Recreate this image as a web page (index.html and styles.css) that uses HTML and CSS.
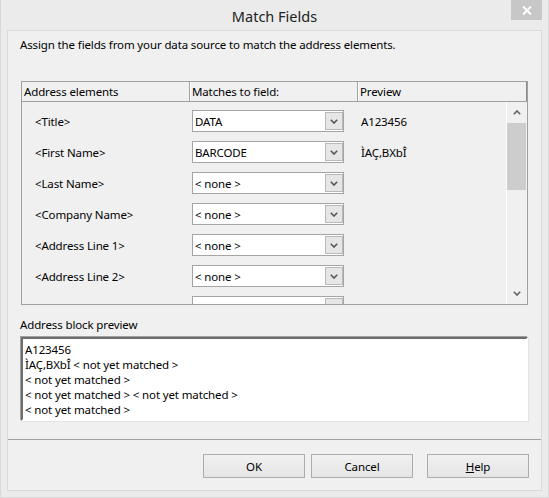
FILE: index.html
```html
<!DOCTYPE html>
<html lang="en">
<head>
    <meta charset="UTF-8">
    <title>Match Fields</title>
    <link rel="stylesheet" href="styles.css">
</head>
<body>

<div class="window">
    <div class="titlebar">
        <span></span>
        <div class="title">Match Fields</div>
        <div class="close">
            <svg width="10" height="9" viewBox="0 0 10 9"><path d="M1 0.5 L9 8.5 M9 0.5 L1 8.5" stroke="#fff" stroke-width="2"/></svg>
        </div>
    </div>

    <div class="client">
        <p class="intro">Assign the fields from your data source to match the address elements.</p>

        <div class="fields">
            <div class="fields-head">
                <div class="head-cell">Address elements</div>
                <div class="head-cell">Matches to field:</div>
                <div class="head-cell last">Preview</div>
            </div>
            <div class="fields-body">
                <div class="rows">
                    <div class="row">
                        <span class="label">&lt;Title&gt;</span>
                        <div class="combo"><span class="value">DATA</span><span class="drop"><svg width="8" height="5"><path d="M0.8 0.8 L4 4 L7.2 0.8" fill="none" stroke="#555" stroke-width="1.6"/></svg></span></div>
                        <span class="preview">A123456</span>
                    </div>
                    <div class="row">
                        <span class="label">&lt;First Name&gt;</span>
                        <div class="combo"><span class="value">BARCODE</span><span class="drop"><svg width="8" height="5"><path d="M0.8 0.8 L4 4 L7.2 0.8" fill="none" stroke="#555" stroke-width="1.6"/></svg></span></div>
                        <span class="preview">ÌAÇ,BXbÎ</span>
                    </div>
                    <div class="row">
                        <span class="label">&lt;Last Name&gt;</span>
                        <div class="combo"><span class="value">&lt; none &gt;</span><span class="drop"><svg width="8" height="5"><path d="M0.8 0.8 L4 4 L7.2 0.8" fill="none" stroke="#555" stroke-width="1.6"/></svg></span></div>
                        <span class="preview"></span>
                    </div>
                    <div class="row">
                        <span class="label">&lt;Company Name&gt;</span>
                        <div class="combo"><span class="value">&lt; none &gt;</span><span class="drop"><svg width="8" height="5"><path d="M0.8 0.8 L4 4 L7.2 0.8" fill="none" stroke="#555" stroke-width="1.6"/></svg></span></div>
                        <span class="preview"></span>
                    </div>
                    <div class="row">
                        <span class="label">&lt;Address Line 1&gt;</span>
                        <div class="combo"><span class="value">&lt; none &gt;</span><span class="drop"><svg width="8" height="5"><path d="M0.8 0.8 L4 4 L7.2 0.8" fill="none" stroke="#555" stroke-width="1.6"/></svg></span></div>
                        <span class="preview"></span>
                    </div>
                    <div class="row">
                        <span class="label">&lt;Address Line 2&gt;</span>
                        <div class="combo"><span class="value">&lt; none &gt;</span><span class="drop"><svg width="8" height="5"><path d="M0.8 0.8 L4 4 L7.2 0.8" fill="none" stroke="#555" stroke-width="1.6"/></svg></span></div>
                        <span class="preview"></span>
                    </div>
                    <div class="row">
                        <span class="label">&lt;City&gt;</span>
                        <div class="combo"><span class="value">&lt; none &gt;</span><span class="drop"><svg width="8" height="5"><path d="M0.8 0.8 L4 4 L7.2 0.8" fill="none" stroke="#555" stroke-width="1.6"/></svg></span></div>
                        <span class="preview"></span>
                    </div>
                </div>
                <div class="scrollbar">
                    <span class="arrow"><svg width="8" height="5"><path d="M0.8 4.2 L4 1 L7.2 4.2" fill="none" stroke="#606060" stroke-width="1.6"/></svg></span>
                    <div class="track"><div class="thumb"></div></div>
                    <span class="arrow"><svg width="8" height="5"><path d="M0.8 0.8 L4 4 L7.2 0.8" fill="none" stroke="#606060" stroke-width="1.6"/></svg></span>
                </div>
            </div>
        </div>

        <div class="block-label">Address block preview</div>
        <div class="block-preview">
            <div>A123456</div>
            <div>ÌAÇ,BXbÎ &lt; not yet matched &gt;</div>
            <div>&lt; not yet matched &gt;</div>
            <div>&lt; not yet matched &gt; &lt; not yet matched &gt;</div>
            <div>&lt; not yet matched &gt;</div>
        </div>

        <div class="separator"></div>

        <div class="buttons">
            <button>OK</button>
            <button>Cancel</button>
            <button class="help"><u>H</u>elp</button>
        </div>
    </div>
</div>

</body>
</html>
```

FILE: styles.css
```css
* {
    box-sizing: border-box;
    margin: 0;
    padding: 0;
}

body {
    font-family: 'Noto Sans', 'Open Sans', sans-serif;
    font-size: 11.5px;
    letter-spacing: -0.13px;
    line-height: 15px;
    color: #000;
    background-color: #ebebeb;
}

.window {
    width: 549px;
    height: 498px;
    display: flex;
    flex-direction: column;
    background-color: #ebebeb;
    border: 1px solid #d9d9d9;
    border-top: none;
    padding: 0 6px 6px;
}

.titlebar {
    height: 30px;
    display: grid;
    grid-template-columns: 1fr auto 1fr;
    align-items: start;
}

.title {
    font-size: 14.5px;
    letter-spacing: 0;
    line-height: 20px;
    padding-top: 6px;
    color: #222;
}

.close {
    justify-self: end;
    width: 31px;
    height: 20px;
    background-color: #c7c7c7;
    display: flex;
    align-items: center;
    justify-content: center;
}

.client {
    flex: 1;
    background-color: #f0f0f0;
    border: 1px solid #dadada;
    display: flex;
    flex-direction: column;
}

.intro {
    margin: 6px 0 0 12px;
}

/* field mapping list */
.fields {
    margin: 29px 0 0 13px;
    width: 507px;
    border: 1px solid #a0a0a0;
}

.fields-head {
    display: grid;
    grid-template-columns: 168px 168px 1fr;
    height: 20px;
    border-bottom: 1px solid #a0a0a0;
}

.head-cell {
    padding: 2px 0 0 2px;
    border-right: 1px solid #a0a0a0;
    box-shadow: 1px 0 0 #fff;
}

.head-cell.last {
    border-right: 1px solid #8c8c8c;
    box-shadow: none;
}

.fields-body {
    display: flex;
    height: 202px;
    overflow: hidden;
}

.rows {
    flex: 1;
    padding-top: 8px;
    display: flex;
    flex-direction: column;
    gap: 9px;
}

.row {
    display: grid;
    grid-template-columns: 168px 168px 1fr;
    align-items: center;
    flex-shrink: 0;
}

.label {
    padding-left: 13px;
}

.preview {
    padding-left: 3px;
}

.combo {
    margin-left: 2px;
    width: 152px;
    height: 22px;
    background-color: #fff;
    border: 1px solid #a5a5a5;
    display: flex;
    align-items: center;
}

.combo .value {
    flex: 1;
    padding-left: 2px;
}

.drop {
    width: 18px;
    height: 18px;
    background-color: #e6e6e6;
    border: 1px solid #b9b9b9;
    display: flex;
    align-items: center;
    justify-content: center;
}

.drop svg,
.arrow svg {
    display: block;
}

.scrollbar {
    width: 21px;
    border-left: 1px solid #fff;
    display: flex;
    flex-direction: column;
}

.arrow {
    height: 21px;
    display: flex;
    align-items: center;
    justify-content: center;
}

.track {
    flex: 1;
}

.thumb {
    height: 67px;
    margin-right: 1px;
    background-color: #cdcdcd;
}

/* address block */
.block-label {
    margin: 12px 0 0 12px;
}

.block-preview {
    margin: 5px 0 0 13px;
    width: 507px;
    height: 84px;
    background-color: #fff;
    border: 2px solid;
    border-color: #6d6d6d #fff #fff #6d6d6d;
    box-shadow: -1px -1px 0 #a0a0a0, 1px 1px 0 #e3e3e3;
    padding: 3px 0 0 2px;
}

.separator {
    margin-top: 18px;
    height: 1px;
    background-color: #a0a0a0;
}

.buttons {
    display: flex;
    justify-content: flex-end;
    gap: 6px;
    margin-top: 14px;
    padding-right: 12px;
}

button {
    width: 102px;
    height: 24px;
    font-family: inherit;
    font-size: 11.5px;
    letter-spacing: -0.13px;
    color: #000;
    background: linear-gradient(#f0f0f0, #e5e5e5);
    border: 1px solid #acacac;
}

button.help {
    margin-left: 8px;
}
```
